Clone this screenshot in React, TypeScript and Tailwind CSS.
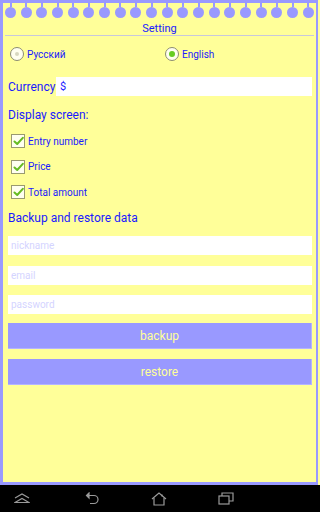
import React from 'react';

const rings = Array.from({ length: 20 });

function Radio({ checked }: { checked: boolean }) {
  return (
    <div className="w-[14px] h-[14px] rounded-full border border-[#8c8c70] bg-[#fffff0] flex items-center justify-center">
      {checked ? (
        <div className="w-[6px] h-[6px] rounded-full bg-[#66cc22]" />
      ) : (
        <div className="w-[4px] h-[4px] rounded-full bg-[#d8d8c0]" />
      )}
    </div>
  );
}

function Check() {
  return (
    <div className="w-[14px] h-[14px] border border-[#9a9a70] bg-[#fffff0] flex items-center justify-center">
      <svg width="11" height="10" viewBox="0 0 11 10">
        <path d="M1.5 5.5 L4.2 8 L9.8 1.8" fill="none" stroke="#66bb22" strokeWidth="2" strokeLinecap="round" strokeLinejoin="round" />
      </svg>
    </div>
  );
}

function App() {
  return (
    <div className="w-[320px] h-[512px] bg-black flex flex-col" style={{ fontFamily: 'Roboto, "Liberation Sans", sans-serif' }}>
      <div className="h-[485px] bg-[#ffff99] pr-[2px]">
        <div className="h-full border-l-[3px] border-r-[2px] border-t-[3px] border-b-[3px] border-[#9999ff] flex flex-col text-[#1a1aff]">
          {/* rings */}
          <div className="flex justify-between px-[2px]">
            {rings.map((_, i) => (
              <div key={i} className="flex flex-col items-center w-[11px]">
                <div className="w-[2px] h-[4px] bg-[#9999ff]" />
                <div className="w-[11px] h-[11px] rounded-full bg-[#9999ff]" />
              </div>
            ))}
          </div>

          <div className="mt-[3px] h-[14px] leading-[15px] text-[11px] text-center">Setting</div>
          <div className="mx-[2px] h-px bg-[#c8c8dc]" />

          {/* language */}
          <div className="mt-[11px] flex items-center h-[14px] pl-[7px]">
            <div className="flex items-center gap-[3px] w-[155px]">
              <Radio checked={false} />
              <span className="text-[10px]">Русский</span>
            </div>
            <div className="flex items-center gap-[3px]">
              <Radio checked />
              <span className="text-[10px]">English</span>
            </div>
          </div>

          {/* currency */}
          <div className="mt-[16px] flex items-center pl-[5px] pr-[4px]">
            <span className="text-[12px] w-[48px]">Currency</span>
            <div className="flex-1 h-[19px] bg-white text-[11px] leading-[19px] pl-[4px]">$</div>
          </div>

          <div className="mt-[11px] pl-[5px] text-[12px] leading-[16px]">Display screen:</div>

          <div className="mt-[5px] flex flex-col pl-[8px]">
            {['Entry number', 'Price', 'Total amount'].map((t, i) => (
              <div key={t} className={`${i === 0 ? 'h-[26px]' : 'h-[25.5px]'} flex items-center gap-[3px]`}>
                <Check />
                <span className="text-[10px]">{t}</span>
              </div>
            ))}
          </div>

          <div className="mt-[5px] pl-[5px] text-[12px] leading-[16px]">Backup and restore data</div>

          <div className="mt-[10px] flex flex-col gap-[10.5px] pl-[5px] pr-[4px]">
            {['nickname', 'email', 'password'].map((p) => (
              <div key={p} className="h-[19px] bg-white text-[10px] leading-[19px] pl-[3px] text-[#d4d4ff]">
                {p}
              </div>
            ))}
          </div>

          <div className="mt-[9px] flex flex-col gap-[10px] pl-[5px] pr-[4px]">
            {['backup', 'restore'].map((b) => (
              <div key={b} className="h-[26px] bg-[#9999ff] border-b border-r border-[#b4b4ff] text-[#ffff99] text-[12px] flex items-center justify-center">
                {b}
              </div>
            ))}
          </div>
        </div>
      </div>

      {/* nav bar */}
      <div className="flex-1 flex items-center">
        <div className="w-[44px] flex justify-center">
          <svg width="16" height="11" viewBox="0 0 16 11" fill="none" stroke="#9a9a9a" strokeWidth="1.2">
            <path d="M1 5 L8 1 L15 5" />
            <path d="M1 9.5 L8 5.5 L15 9.5 Z" />
          </svg>
        </div>
        <div className="w-[96px] flex justify-center">
          <svg width="15" height="13" viewBox="0 0 15 13" fill="none" stroke="#9a9a9a" strokeWidth="1.2">
            <path d="M3 3.5 H9 A4 4 0 0 1 9 11.5 H5" />
            <path d="M4 1 L1.5 3.5 L4 6 Z" fill="#9a9a9a" />
          </svg>
        </div>
        <div className="w-[38px] flex justify-center">
          <svg width="16" height="14" viewBox="0 0 16 14" fill="none" stroke="#9a9a9a" strokeWidth="1.2">
            <path d="M1 7 L8 1 L15 7" />
            <path d="M3 6 V13 H13 V6" />
            <path d="M11 2.5 V4.5" />
          </svg>
        </div>
        <div className="w-[96px] flex justify-center">
          <svg width="16" height="13" viewBox="0 0 16 13" fill="none" stroke="#9a9a9a" strokeWidth="1.2">
            <rect x="1" y="4" width="10" height="8" />
            <path d="M4 4 V1 H15 V9 H11" />
          </svg>
        </div>
      </div>
    </div>
  );
}

export default App;
